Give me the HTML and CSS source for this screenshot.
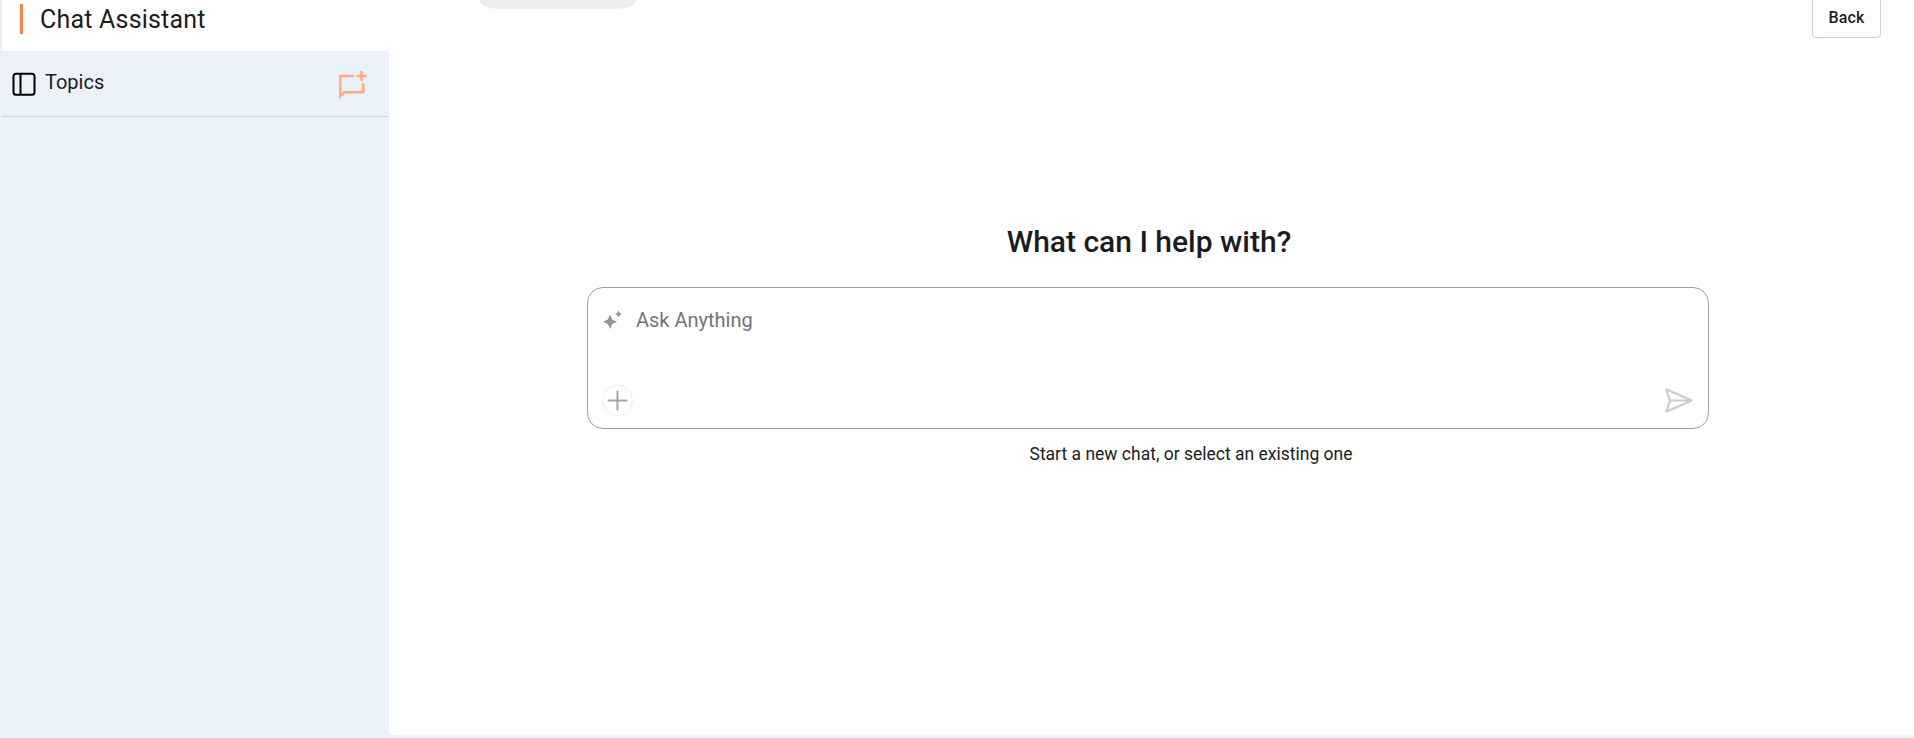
FILE: index.html
```html
<!DOCTYPE html>
<html lang="en">
<head>
<meta charset="utf-8">
<title>Chat Assistant</title>
<link rel="stylesheet" href="styles.css">
</head>
<body>
<div class="app">
  <header class="header">
    <h1 class="title">Chat Assistant</h1>
    <div class="pill"></div>
    <button class="back">Back</button>
  </header>
  <div class="body">
    <aside class="sidebar">
      <div class="topics">
        <svg class="panel-icon" width="24" height="24" viewBox="0 0 24 24" fill="none" stroke="#000" stroke-width="2"><rect x="1.5" y="1.8" width="21" height="21" rx="2.5"/><path d="M8.5 1.8v21"/></svg>
        <span class="topics-label">Topics</span>
        <svg class="new-icon" width="28" height="28" viewBox="0 0 28 28" fill="none" stroke="#ffab7d" stroke-width="2.5"><path d="M15 4.9H1.4v20.3l4-3.9H24.2V12.2"/><path d="M22.5 0v10M17.3 5h10.4"/></svg>
      </div>
    </aside>
    <main class="main">
      <h2 class="heading">What can I help with?</h2>
      <div class="composer">
        <div class="prompt">
          <svg class="sparkle" width="20" height="20" viewBox="0 -.6 20 20" fill="#929496"><path d="M7 4 9.2 9 14 11.2 9.2 13.4 7 18.4 4.8 13.4 0 11.2 4.8 9Z"/><path d="M15.5 0 16.7 2.3 19 3.5 16.7 4.7 15.5 7 14.3 4.7 12 3.5 14.3 2.3Z"/></svg>
          <span class="placeholder">Ask Anything</span>
        </div>
        <div class="actions">
          <span class="add"><svg width="21" height="21" viewBox="0 0 21 21" stroke="#a3a4a6" stroke-width="2" stroke-linecap="round"><path d="M10.5 1.5v18M1.5 10.5h18"/></svg></span>
          <svg class="send" width="28" height="25" viewBox="0 0 28 25" fill="none" stroke="#c8cdcb" stroke-width="2.2" stroke-linejoin="round"><path d="M1.3 1.3 26.5 12.5 1.3 23.7 5 12.5ZM5 12.5h21"/></svg>
        </div>
      </div>
      <p class="hint">Start a new chat, or select an existing one</p>
    </main>
  </div>
</div>
</body>
</html>
```
FILE: styles.css
```css
* { box-sizing: border-box; }
body { margin: 0; background: #eaf1f9; font-family: Roboto, "Liberation Sans", sans-serif; color: #1c1c1e; overflow: hidden; }
.app { height: 738px; padding: 0 0 3px 2px; display: flex; flex-direction: column; }
.header { height: 51px; flex: none; background: #fff; display: flex; align-items: flex-start; }
.title { margin: 4px 0 0 18px; width: 460px; height: 30px; border-left: 3px solid #f58240; padding-left: 17px; font-size: 25px; font-weight: 400; line-height: 32px; letter-spacing: 0.2px; }
.pill { width: 156px; height: 9px; background: #eee; border-radius: 0 0 16px 16px / 0 0 9px 9px; }
.back { margin: -6px 33px 0 auto; width: 69px; height: 44px; padding: 4px 0 0; background: #fff; border: 1px solid #cdd0dc; border-radius: 4px; font: 500 16px/36px Roboto, sans-serif; color: #1c1c1e; letter-spacing: 0.2px; }
.body { flex: 1; display: flex; }
.sidebar { width: 387px; }
.topics { height: 66px; border-bottom: 1px solid #cdd4df; display: flex; align-items: flex-start; padding: 19px 22px 0 10px; }
.panel-icon { margin-top: 2px; }
.topics-label { margin-left: 9px; font-size: 20px; line-height: 24px; }
.new-icon { margin: 1px 0 0 auto; }
.main { flex: 1; background: #fff; display: flex; flex-direction: column; padding: 170px 205px 0 198px; }
.heading { margin: 0; height: 66px; padding-left: 2px; text-align: center; font-size: 30px; font-weight: 500; line-height: 42px; }
.composer { height: 142px; border: 1px solid #a0a1a4; border-radius: 16px; padding: 22px 15px 12px 14px; display: flex; flex-direction: column; justify-content: space-between; }
.prompt { display: flex; align-items: flex-start; padding-left: 1px; }
.placeholder { margin-left: 13px; font-size: 20px; line-height: 20px; color: #757575; }
.actions { display: flex; justify-content: space-between; align-items: center; }
.add { width: 31px; height: 31px; border: 1px solid #e8eef8; border-radius: 50%; display: grid; place-items: center; }
.hint { margin: 13px 0 0 86px; text-align: center; font-size: 17.5px; line-height: 24px; }
```
